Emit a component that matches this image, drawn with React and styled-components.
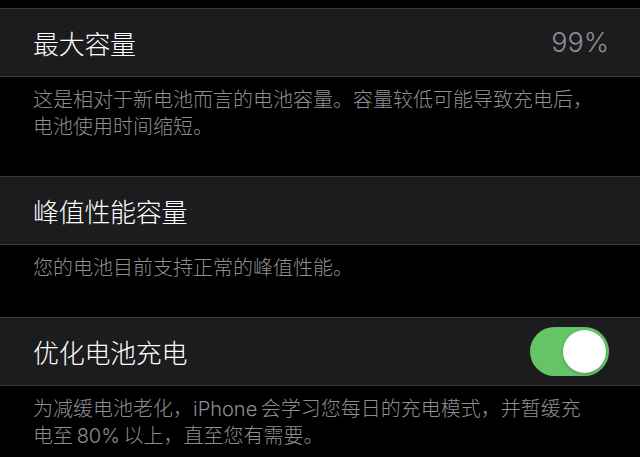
import React from "react";
import styled, { createGlobalStyle } from "styled-components";

const Global = createGlobalStyle`
  html, body { margin: 0; padding: 0; background: #000; }
  body { font-family: Inter, "Noto Sans CJK SC", sans-serif; -webkit-font-smoothing: antialiased; }
`;

const Page = styled.div`
  background: #000;
  padding-top: 8px;
  width: 640px;
  height: 457px;
  overflow: hidden;
  box-sizing: border-box;
`;

const Cell = styled.div`
  display: flex;
  align-items: center;
  justify-content: space-between;
  height: 67px;
  padding: 0 31px 0 33px;
  background: #1c1c1e;
  border-top: 1px solid #3a3a3c;
  border-bottom: 1px solid #3a3a3c;
`;

const Title = styled.span`
  color: #fff;
  font-size: 26px;
  font-weight: 300;
  font-family: Inter, "Noto Sans CJK SC", sans-serif;
  letter-spacing: -0.3px;
`;

const Value = styled.span`
  color: #8e8e93;
  font-size: 27px;
  font-weight: 300;
  font-family: Inter, "Noto Sans CJK SC", sans-serif;
`;

const Footer = styled.div`
  padding: 10px 40px 35px 33px;
  color: #8e8e93;
  font-size: 20px;
  font-weight: 300;
  line-height: 27px;
  font-family: Inter, "Noto Sans CJK SC", sans-serif;
`;

const Toggle = styled.div`
  width: 79px;
  height: 49px;
  border-radius: 25px;
  background: ${(p) => (p.on ? "#65c466" : "#39393d")};
  position: relative;
  flex: none;
`;

const Knob = styled.div`
  position: absolute;
  top: 3px;
  left: ${(p) => (p.on ? "33px" : "3px")};
  width: 43px;
  height: 43px;
  border-radius: 50%;
  background: #fff;
  box-shadow: 0 1px 3px rgba(0, 0, 0, 0.25);
`;

export default function App() {
  return (
    <>
      <Global />
      <Page>
        <Cell>
          <Title>最大容量</Title>
          <Value>99%</Value>
        </Cell>
        <Footer>
          这是相对于新电池而言的电池容量。容量较低可能导致充电后，电池使用时间缩短。
        </Footer>
        <Cell>
          <Title>峰值性能容量</Title>
        </Cell>
        <Footer>您的电池目前支持正常的峰值性能。</Footer>
        <Cell>
          <Title>优化电池充电</Title>
          <Toggle on>
            <Knob on />
          </Toggle>
        </Cell>
        <Footer>
          {"为减缓电池老化，iPhone\u2009会学习您每日的充电模式，并暂缓充电至\u200980%\u2009以上，直至您有需要。"}
        </Footer>
      </Page>
    </>
  );
}
